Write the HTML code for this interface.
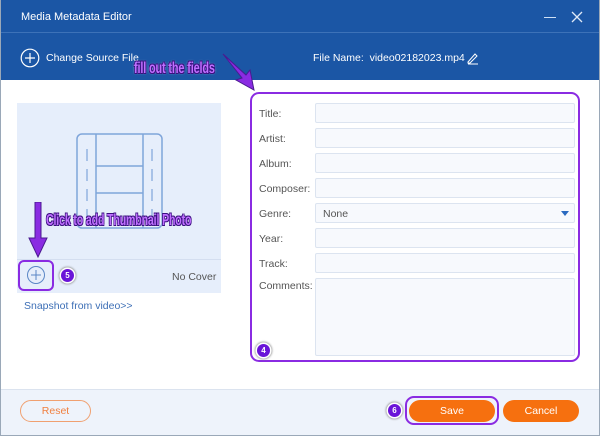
<!DOCTYPE html><html><head><style>
*{margin:0;padding:0;box-sizing:border-box}
body{width:600px;height:436px;overflow:hidden;background:#fff;font-family:"Liberation Sans",sans-serif;position:relative;font-size:11px;color:#444}
.a{position:absolute}
.in{position:absolute;left:315px;width:260px;height:20px;background:#f7f9fd;border:1px solid #dce4f0;border-radius:2px}
.lb{position:absolute;left:259px;font-size:10.5px;color:#555}
.ann{font-family:"Liberation Sans",sans-serif;font-weight:bold;color:#c070ff;font-size:16px;letter-spacing:-0.2px;white-space:nowrap;text-shadow:-1px -1px 0 #3a1080,1px -1px 0 #3a1080,-1px 1px 0 #3a1080,1px 1px 0 #3a1080,0 0 3px #fff;transform-origin:left top}
.num{position:absolute;width:13px;height:13px;border-radius:50%;background:#6a14d8;color:#fff;font-size:8px;font-weight:bold;text-align:center;line-height:13px;box-shadow:0 0 0 1.5px #fff,0 0 2px 2px #888}
.btn{position:absolute;height:22px;border-radius:11px;text-align:center;line-height:22px;font-size:10.5px}
</style></head><body>
<div class="a" style="left:0;top:0;width:600px;height:80px;background:#1b56a5"></div>
<div class="a" style="left:0;top:32px;width:600px;height:1px;background:#3d72b8"></div>
<div class="a" style="left:21px;top:11px;color:#fff;font-size:11px">Media Metadata Editor</div>
<div class="a" style="left:544px;top:17px;width:12px;height:1px;background:#cfe0f5"></div>
<svg class="a" style="left:571px;top:11px" width="12" height="12"><path d="M1 1L11 11M11 1L1 11" stroke="#dfe9f7" stroke-width="1.3"/></svg>
<svg class="a" style="left:20px;top:48px" width="20" height="20"><circle cx="10" cy="10" r="8.8" fill="none" stroke="#fff" stroke-width="1.2"/><path d="M10 5V15M5 10H15" stroke="#fff" stroke-width="1.2"/></svg>
<div class="a" style="left:46px;top:52px;color:#fff;font-size:10.5px">Change Source File</div>
<div class="a" style="left:313px;top:52px;color:#fff;font-size:10.5px">File Name:&nbsp; video02182023.mp4</div>
<svg class="a" style="left:465px;top:51px" width="14" height="14"><path d="M3 11L10 3L12 5L5 12H3Z M3 13H13" stroke="#fff" fill="none" stroke-width="1"/></svg>
<div class="a ann" style="left:134px;top:60px;transform:scaleX(0.68)">fill out the fields</div>
<svg class="a" style="left:218px;top:52px" width="40" height="40"><path d="M5 2L24 26L18 28L36 38L32 18L28 23Z" fill="#8a2be2" stroke="#4a1a90" stroke-width="1"/></svg>
<div class="a" style="left:17px;top:103px;width:204px;height:190px;background:#e6eefb"></div>
<div class="a" style="left:17px;top:259px;width:204px;height:1px;background:#d4def0"></div>
<svg class="a" style="left:76px;top:133px" width="88" height="96"><rect x="1" y="1" width="85" height="94" rx="5" fill="none" stroke="#7fa5da" stroke-width="1.5"/><path d="M20 1V95M67 1V95M20 33H67M20 60H67" stroke="#7fa5da" stroke-width="1.5"/><path d="M11 16V28M11 36V48M11 56V68M11 76V88M76 16V28M76 36V48M76 56V68M76 76V88" stroke="#7fa5da" stroke-width="1.2"/></svg>
<div class="a ann" style="left:46px;top:212px;transform:scaleX(0.66)">Click to add Thumbnail Photo</div>
<svg class="a" style="left:28px;top:202px" width="20" height="56"><path d="M7 0H13V36H19L10 55L1 36H7Z" fill="#8a2be2" stroke="#4a1a90"/></svg>
<div class="a" style="left:18px;top:260px;width:36px;height:31px;border:2.5px solid #8a2be2;border-radius:6px"></div>
<svg class="a" style="left:26px;top:265px" width="20" height="20"><circle cx="10" cy="10" r="8.5" fill="none" stroke="#5a86c6" stroke-width="1"/><path d="M10 5V15M5 10H15" stroke="#5a86c6"/></svg>
<div class="num" style="left:61px;top:269px">5</div>
<div class="a" style="left:172px;top:271px;font-size:10.5px;color:#555">No Cover</div>
<div class="a" style="left:24px;top:300px;font-size:10.5px;color:#3d6fb6">Snapshot from video&gt;&gt;</div>
<div class="a" style="left:250px;top:92px;width:330px;height:270px;border:2.5px solid #8a2be2;border-radius:9px"></div>
<div class="lb" style="top:108px">Title:</div><div class="in" style="top:103px"></div>
<div class="lb" style="top:133px">Artist:</div><div class="in" style="top:128px"></div>
<div class="lb" style="top:158px">Album:</div><div class="in" style="top:153px"></div>
<div class="lb" style="top:183px">Composer:</div><div class="in" style="top:178px"></div>
<div class="lb" style="top:208px">Genre:</div><div class="in" style="top:203px"><span style="position:absolute;left:7px;top:4px;font-size:10.5px;color:#555">None</span><span style="position:absolute;right:5px;top:7px;border-left:4px solid transparent;border-right:4px solid transparent;border-top:5px solid #2a6ac0"></span></div>
<div class="lb" style="top:233px">Year:</div><div class="in" style="top:228px"></div>
<div class="lb" style="top:258px">Track:</div><div class="in" style="top:253px"></div>
<div class="lb" style="top:280px">Comments:</div><div class="in" style="top:278px;height:78px"></div>
<div class="num" style="left:257px;top:344px">4</div>
<div class="a" style="left:0;top:389px;width:600px;height:47px;background:#eef3fb;border-top:1px solid #dbe3ef"></div>
<div class="btn" style="left:20px;top:400px;width:71px;border:1px solid #f0a070;color:#f08040;line-height:20px">Reset</div>
<div class="num" style="left:388px;top:404px">6</div>
<div class="a" style="left:405px;top:396px;width:94px;height:29px;border:2.5px solid #8a2be2;border-radius:9px"></div>
<div class="btn" style="left:409px;top:400px;width:86px;background:#f6700f;color:#fff">Save</div>
<div class="btn" style="left:503px;top:400px;width:76px;background:#f6700f;color:#fff">Cancel</div>
<div class="a" style="left:0;top:0;width:600px;height:436px;border:1px solid #9aa8b8;border-top:none;pointer-events:none"></div>
</body></html>
